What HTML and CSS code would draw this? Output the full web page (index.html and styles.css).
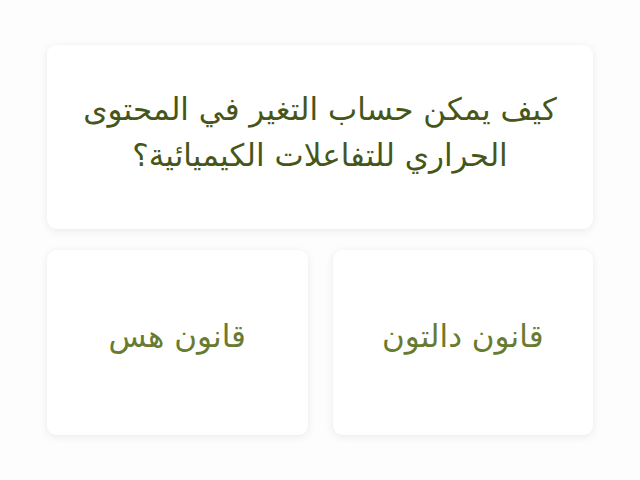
FILE: index.html
```html
<!DOCTYPE html>
<html lang="ar" dir="rtl">
<head>
<meta charset="utf-8">
<link rel="stylesheet" href="styles.css">
</head>
<body>
<main class="quiz">
  <section class="card question">
    <p class="question-text">كيف يمكن حساب التغير في المحتوى الحراري للتفاعلات الكيميائية؟</p>
  </section>
  <div class="answers">
    <button class="card answer">قانون دالتون</button>
    <button class="card answer">قانون هس</button>
  </div>
</main>
</body>
</html>
```
FILE: styles.css
```css
html, body {
  margin: 0;
  padding: 0;
  background: #fdfdfd;
}
.quiz {
  width: 640px;
  height: 480px;
  box-sizing: border-box;
  padding: 45px 47px 0 47px;
  display: flex;
  flex-direction: column;
  gap: 21px;
  font-family: "DejaVu Sans", "Noto Sans", sans-serif;
}
.card {
  background: #ffffff;
  border: none;
  border-radius: 9px;
  box-shadow: 0 2px 10px rgba(0, 0, 0, 0.07), 0 0 2px rgba(0, 0, 0, 0.04);
}
.question {
  height: 184px;
  box-sizing: border-box;
  display: flex;
  align-items: center;
  justify-content: center;
  padding: 0 36px 10px 36px;
}
.question-text {
  margin: 0;
  text-align: center;
  font-size: 31px;
  line-height: 46px;
  color: #46561a;
}
.answers {
  display: flex;
  gap: 25px;
}
.answer {
  flex: 1;
  height: 185px;
  box-sizing: border-box;
  display: flex;
  align-items: center;
  justify-content: center;
  font-family: "DejaVu Sans", "Noto Sans", sans-serif;
  font-size: 31px;
  color: #687b30;
  padding: 0 0 14px 0;
}
```
